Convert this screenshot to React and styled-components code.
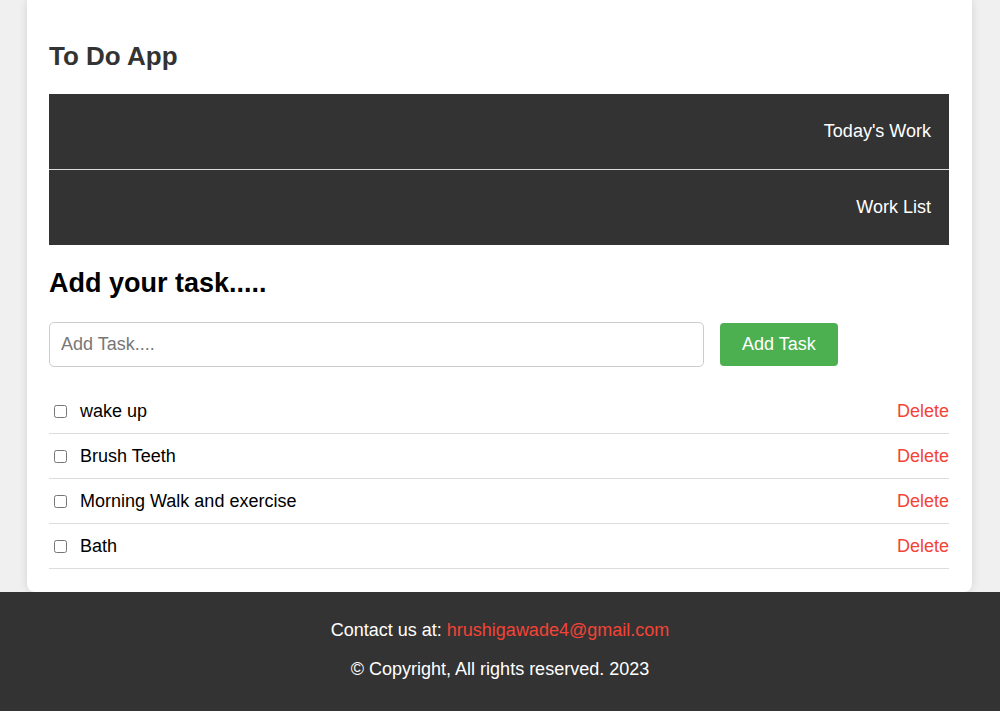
import React from 'react'
import styled, { createGlobalStyle } from 'styled-components'

const GlobalStyle = createGlobalStyle`
    body {
        margin: 0;
        background: #f0f0f0;
        font-family: "Liberation Sans", Arial, sans-serif;
    }
`

const StyledCard = styled.div`
    width: 945px;
    box-sizing: border-box;
    margin: 0 0 0 27px;
    padding: 41px 23px 23px 22px;
    background: #fff;
    border-radius: 0 0 8px 8px;
    box-shadow: 0 0 10px rgba(0, 0, 0, 0.12);
`

const StyledTitle = styled.h1`
    margin: 0;
    font-size: 26px;
    line-height: 30px;
    color: #333;
`

const StyledNav = styled.ul`
    list-style: none;
    margin: 23px 0 0;
    padding: 0;
    background: #333;
`

const StyledNavItem = styled.li`
    height: 75px;
    display: flex;
    align-items: center;
    justify-content: flex-end;
    padding: 0 18px;
    color: #fff;
    font-size: 18px;
    border-bottom: ${({ last }) => last ? 'none' : '1px solid #ddd'};
`

const StyledHeading = styled.h2`
    margin: 23px 0 0;
    font-size: 27px;
    line-height: 31px;
    color: #000;
`

const StyledForm = styled.div`
    display: flex;
    align-items: center;
    gap: 16px;
    margin-top: 23px;
`

const StyledInput = styled.input`
    width: 655px;
    height: 45px;
    box-sizing: border-box;
    padding: 0 11px;
    border: 1px solid #ccc;
    border-radius: 5px;
    font-family: inherit;
    font-size: 18px;
    color: #333;
    &::placeholder {
        color: #777;
    }
`

const StyledButton = styled.button`
    height: 43px;
    padding: 0 22px;
    border: none;
    border-radius: 4px;
    background: #4caf50;
    color: #fff;
    font-family: inherit;
    font-size: 18px;
    cursor: pointer;
`

const StyledList = styled.ul`
    list-style: none;
    margin: 22px 0 0;
    padding: 0;
`

const StyledRow = styled.li`
    height: 44px;
    display: flex;
    align-items: center;
    border-bottom: 1px solid #ddd;
    font-size: 18px;
    color: #000;
`

const StyledCheck = styled.input`
    width: 13px;
    height: 13px;
    margin: 0 3px 0 5px;
`

const StyledLabel = styled.span`
    margin-left: 10px;
    flex: 1;
`

const StyledDelete = styled.button`
    background: none;
    border: none;
    padding: 0;
    font-family: inherit;
    font-size: 18px;
    color: #f44336;
    cursor: pointer;
`

const StyledFooter = styled.footer`
    background: #333;
    color: #fff;
    text-align: center;
    font-size: 18px;
    padding: 28px 0 31px;
`

const StyledLine = styled.p`
    margin: ${({ first }) => first ? '0' : '18px 0 0'};
    line-height: 21px;
`

const StyledMail = styled.a`
    color: #f44336;
    text-decoration: none;
`

const tasks = ['wake up', 'Brush Teeth', 'Morning Walk and exercise', 'Bath']

export default function App() {
    const [items, setItems] = React.useState(tasks)
    const [text, setText] = React.useState('')

    const addTask = () => {
        if (!text.trim()) return
        setItems([...items, text.trim()])
        setText('')
    }

    return <>
        <GlobalStyle />
        <StyledCard>
            <StyledTitle>To Do App</StyledTitle>
            <StyledNav>
                <StyledNavItem>Today's Work</StyledNavItem>
                <StyledNavItem last>Work List</StyledNavItem>
            </StyledNav>
            <StyledHeading>Add your task.....</StyledHeading>
            <StyledForm>
                <StyledInput
                    placeholder="Add Task...."
                    value={text}
                    onChange={e => setText(e.target.value)}
                />
                <StyledButton onClick={addTask}>Add Task</StyledButton>
            </StyledForm>
            <StyledList>
                {items.map((task, i) => (
                    <StyledRow key={i}>
                        <StyledCheck type="checkbox" />
                        <StyledLabel>{task}</StyledLabel>
                        <StyledDelete onClick={() => setItems(items.filter((_, j) => j !== i))}>Delete</StyledDelete>
                    </StyledRow>
                ))}
            </StyledList>
        </StyledCard>
        <StyledFooter>
            <StyledLine first>Contact us at: <StyledMail href="mailto:hrushigawade4@gmail.com">hrushigawade4@gmail.com</StyledMail></StyledLine>
            <StyledLine>© Copyright, All rights reserved. 2023</StyledLine>
        </StyledFooter>
    </>
}
